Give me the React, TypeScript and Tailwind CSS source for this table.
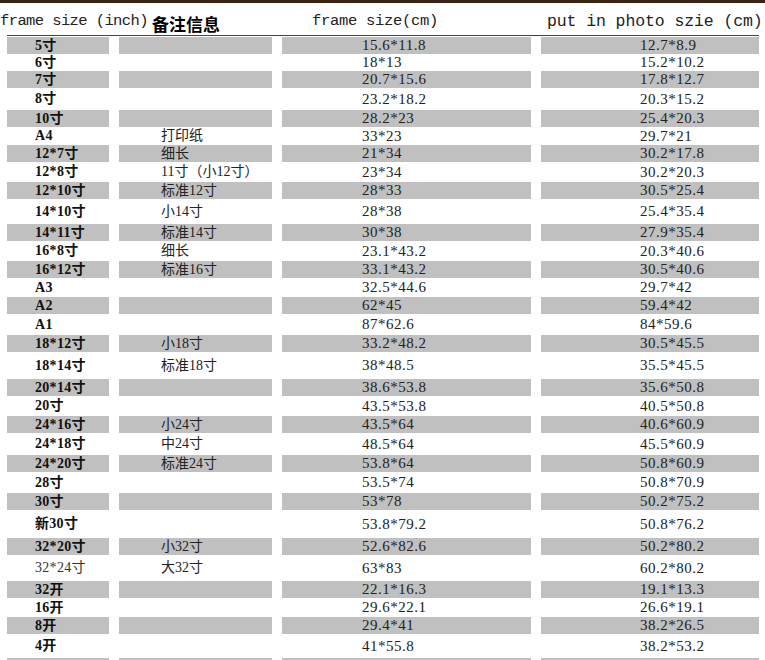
import React from "react";

type SizeRow = {
  inch: string;
  note: string;
  frame: string;
  photo: string;
  h: string;
  light?: boolean;
};

// even rows are the grey bands, odd rows are white with uneven heights
const sizeRows: SizeRow[] = [
  { inch: "5寸", note: "", frame: "15.6*11.8", photo: "12.7*8.9", h: "h-[17px]" },
  { inch: "6寸", note: "", frame: "18*13", photo: "15.2*10.2", h: "h-[17px]" },
  { inch: "7寸", note: "", frame: "20.7*15.6", photo: "17.8*12.7", h: "h-[17px]" },
  { inch: "8寸", note: "", frame: "23.2*18.2", photo: "20.3*15.2", h: "h-[22px]" },
  { inch: "10寸", note: "", frame: "28.2*23", photo: "25.4*20.3", h: "h-[17px]" },
  { inch: "A4", note: "打印纸", frame: "33*23", photo: "29.7*21", h: "h-[18px]" },
  { inch: "12*7寸", note: "细长", frame: "21*34", photo: "30.2*17.8", h: "h-[17px]" },
  { inch: "12*8寸", note: "11寸（小12寸）", frame: "23*34", photo: "30.2*20.3", h: "h-[20px]" },
  { inch: "12*10寸", note: "标准12寸", frame: "28*33", photo: "30.5*25.4", h: "h-[17px]" },
  { inch: "14*10寸", note: "小14寸", frame: "28*38", photo: "25.4*35.4", h: "h-[25px]" },
  { inch: "14*11寸", note: "标准14寸", frame: "30*38", photo: "27.9*35.4", h: "h-[17px]" },
  { inch: "16*8寸", note: "细长", frame: "23.1*43.2", photo: "20.3*40.6", h: "h-[20px]" },
  { inch: "16*12寸", note: "标准16寸", frame: "33.1*43.2", photo: "30.5*40.6", h: "h-[17px]" },
  { inch: "A3", note: "", frame: "32.5*44.6", photo: "29.7*42", h: "h-[19px]" },
  { inch: "A2", note: "", frame: "62*45", photo: "59.4*42", h: "h-[17px]" },
  { inch: "A1", note: "", frame: "87*62.6", photo: "84*59.6", h: "h-[21px]" },
  { inch: "18*12寸", note: "小18寸", frame: "33.2*48.2", photo: "30.5*45.5", h: "h-[17px]" },
  { inch: "18*14寸", note: "标准18寸", frame: "38*48.5", photo: "35.5*45.5", h: "h-[27px]" },
  { inch: "20*14寸", note: "", frame: "38.6*53.8", photo: "35.6*50.8", h: "h-[17px]" },
  { inch: "20寸", note: "", frame: "43.5*53.8", photo: "40.5*50.8", h: "h-[20px]" },
  { inch: "24*16寸", note: "小24寸", frame: "43.5*64", photo: "40.6*60.9", h: "h-[17px]" },
  { inch: "24*18寸", note: "中24寸", frame: "48.5*64", photo: "45.5*60.9", h: "h-[22px]" },
  { inch: "24*20寸", note: "标准24寸", frame: "53.8*64", photo: "50.8*60.9", h: "h-[17px]" },
  { inch: "28寸", note: "", frame: "53.5*74", photo: "50.8*70.9", h: "h-[21px]" },
  { inch: "30寸", note: "", frame: "53*78", photo: "50.2*75.2", h: "h-[17px]" },
  { inch: "新30寸", note: "", frame: "53.8*79.2", photo: "50.8*76.2", h: "h-[28px]" },
  { inch: "32*20寸", note: "小32寸", frame: "52.6*82.6", photo: "50.2*80.2", h: "h-[17px]" },
  { inch: "32*24寸", note: "大32寸", frame: "63*83", photo: "60.2*80.2", h: "h-[26px]", light: true },
  { inch: "32开", note: "", frame: "22.1*16.3", photo: "19.1*13.3", h: "h-[17px]" },
  { inch: "16开", note: "", frame: "29.6*22.1", photo: "26.6*19.1", h: "h-[19px]" },
  { inch: "8开", note: "", frame: "29.4*41", photo: "38.2*26.5", h: "h-[17px]" },
  { inch: "4开", note: "", frame: "41*55.8", photo: "38.2*53.2", h: "h-[24px]" },
  { inch: "", note: "", frame: "", photo: "", h: "h-[17px]" },
];

const mono = "font-['Liberation_Mono','Noto_Sans_CJK_SC',monospace]";
const serif = "font-['Liberation_Serif','Noto_Sans_CJK_SC',serif]";

function Row({ row, grey }: { row: SizeRow; grey: boolean }) {
  const bg = grey ? "bg-[#c0c0c0]" : "";
  return (
    <div className={`flex gap-[10px] pl-[7px] ${row.h}`}>
      <div className={`w-[102px] flex items-center pl-[28px] ${bg}`}>
        <span
          className={`${serif} text-[14px] leading-none tracking-[0.3px] ${
            row.light ? "font-normal text-[#333]" : "font-bold text-[#111]"
          }`}
        >
          {row.inch}
        </span>
      </div>
      <div className={`w-[153px] flex items-center pl-[42px] ${bg}`}>
        <span className={`${serif} text-[14px] leading-none text-[#222]`}>
          {row.note}
        </span>
      </div>
      <div className={`w-[249px] flex items-center pl-[80px] ${bg}`}>
        <span className={`${serif} text-[15px] leading-none tracking-[0.5px] text-[#222]`}>
          {row.frame}
        </span>
      </div>
      <div className={`w-[218px] flex items-center pl-[99px] ${bg}`}>
        <span className={`${serif} text-[15px] leading-none tracking-[0.5px] text-[#222]`}>
          {row.photo}
        </span>
      </div>
    </div>
  );
}

export default function App() {
  return (
    <div className="w-[765px] h-[660px] overflow-hidden bg-white">
      <div className="h-[3px] bg-[#3c2414]" />
      <div className="flex h-[32px] items-start">
        <span className={`${mono} w-[152px] pt-[11px] text-[15.5px] leading-none tracking-[-0.6px] text-[#222] whitespace-nowrap`}>
          frame size (inch)
        </span>
        <span className="w-[160px] pt-[12px] font-['Noto_Sans_CJK_SC',sans-serif] text-[17px] font-bold leading-none text-black">
          备注信息
        </span>
        <span className={`${mono} w-[235px] pt-[11px] text-[15.5px] leading-none tracking-[-0.3px] text-[#222] whitespace-nowrap`}>
          frame size(cm)
        </span>
        <span className={`${mono} pt-[11px] text-[16.5px] leading-none tracking-[-0.1px] text-[#222] whitespace-nowrap`}>
          put in photo szie (cm)
        </span>
      </div>
      <div className="ml-[7px] w-[752px] h-px bg-[#444]" />
      <div className="h-px" />
      {sizeRows.map((row, i) => (
        <Row key={i} row={row} grey={i % 2 === 0} />
      ))}
    </div>
  );
}
